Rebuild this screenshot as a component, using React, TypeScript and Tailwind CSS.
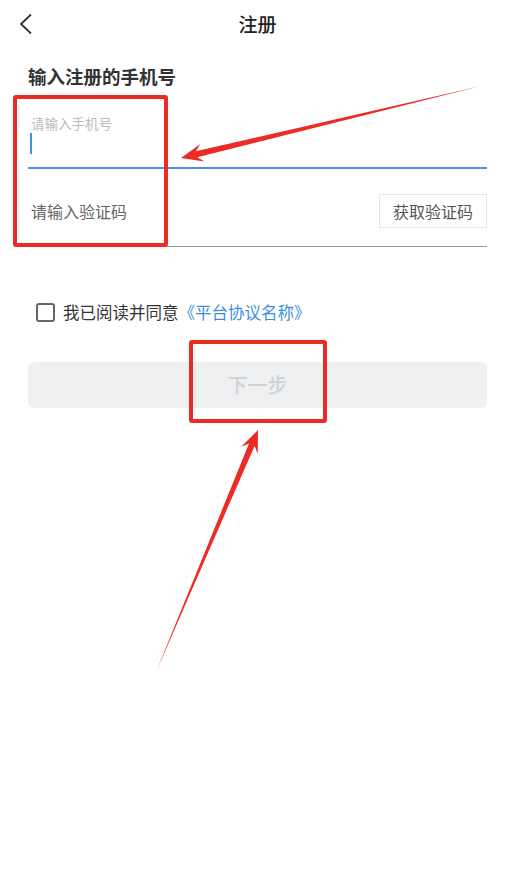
import React from 'react';

// tapered annotation arrow: thin at the tail, wide near the head
function arrowPoints(tx: number, ty: number, hx: number, hy: number) {
  const dx = hx - tx;
  const dy = hy - ty;
  const len = Math.hypot(dx, dy);
  const ux = dx / len;
  const uy = dy / len;
  const nx = -uy;
  const ny = ux;
  const j = 16; // shaft joins head
  const w = 22; // wings
  const p = (a: number, b: number) => `${(hx - ux * a + nx * b).toFixed(1)},${(hy - uy * a + ny * b).toFixed(1)}`;
  return [
    `${tx},${ty}`,
    p(j, 3),
    p(w, 9),
    `${hx},${hy}`,
    p(w, -9),
    p(j, -3),
  ].join(' ');
}

export default function App() {
  const font = { fontFamily: '"Noto Sans CJK SC", "Noto Sans", sans-serif' };
  return (
    <div className="relative w-[515px] h-[896px] bg-white overflow-hidden text-[#333]" style={font}>
      {/* Header */}
      <div className="relative h-[46px] flex items-center justify-center">
        <svg className="absolute left-[18px] top-[13px]" width="16" height="22" viewBox="0 0 16 22">
          <polyline points="13,1.5 3,11 13,20.5" fill="none" stroke="#333" strokeWidth="1.8" />
        </svg>
        <h1 className="text-[19px] font-medium text-[#222] leading-none">注册</h1>
      </div>

      <div className="px-[28px]">
        <h2 className="mt-[17px] text-[18.5px] font-bold leading-[26px] text-[#333]">输入注册的手机号</h2>

        {/* Phone input */}
        <div className="pt-[26px] border-b-2 border-[#4a90e2]">
          <p className="pl-[3px] text-[13.5px] leading-[16px] text-[#bbb]">请输入手机号</p>
          <div className="mt-[2px] mb-[13px] ml-[2px] w-[2px] h-[21px] bg-[#4a90e2]" />
        </div>

        {/* Code input */}
        <div className="flex items-center justify-between h-[78px] pt-[6px] border-b border-[#999]">
          <span className="pl-[3px] text-[16px] text-[#666]">请输入验证码</span>
          <button className="w-[108px] h-[34px] border border-[#e6e6e6] text-[16px] text-[#555]">获取验证码</button>
        </div>

        {/* Agreement */}
        <div className="mt-[55px] ml-[8px] flex items-center">
          <span className="w-[19px] h-[19px] border-2 border-[#666] rounded-[3px]" />
          <span className="ml-[8px] text-[16.5px] leading-[20px] text-[#333]">
            我已阅读并同意<span className="text-[#3b8fe0]">《平台协议名称》</span>
          </span>
        </div>

        {/* Next button */}
        <button className="mt-[40px] w-full h-[46px] rounded-[6px] bg-[#eef0f2] text-[20px] font-medium text-[#cfd2d5]">下一步</button>
      </div>

      {/* Annotation overlay */}
      <div className="absolute left-[13px] top-[95px] w-[155px] h-[152px] border-4 border-[#ec2b24] rounded-[3px]" />
      <div className="absolute left-[189px] top-[340px] w-[138px] h-[83px] border-4 border-[#ec2b24] rounded-[3px]" />
      <svg className="absolute left-0 top-0 pointer-events-none" width="515" height="896">
        <polygon points={arrowPoints(481, 86, 181, 158)} fill="#ec2b24" />
        <polygon points={arrowPoints(156, 672, 258, 430)} fill="#ec2b24" />
      </svg>
    </div>
  );
}
